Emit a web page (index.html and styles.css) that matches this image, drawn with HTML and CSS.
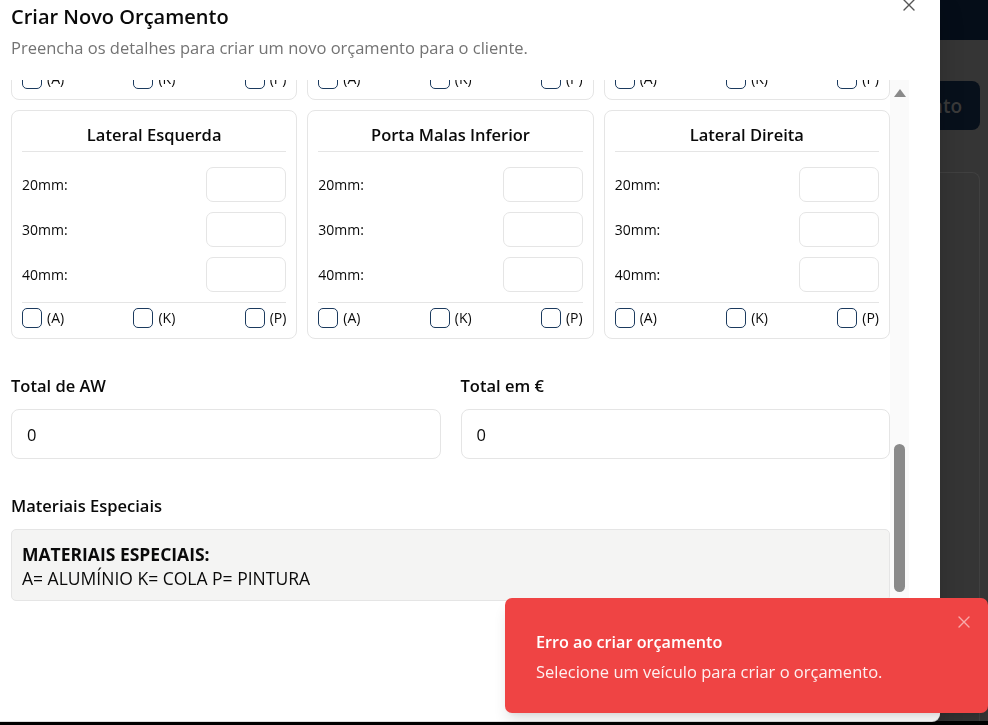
FILE: index.html
```html
<!DOCTYPE html>
<html lang="pt">
<head>
<meta charset="utf-8">
<title>Criar Novo Orçamento</title>
<link rel="stylesheet" href="styles.css">
</head>
<body>
<div class="page">
  <header class="app-bar"></header>
  <main class="app-main">
    <div class="app-actions"><button class="app-btn" type="button">Novo Orçamento</button></div>
    <section class="app-card"></section>
  </main>
</div>

<div class="modal" role="dialog" aria-labelledby="modal-title">
  <button class="modal-close" type="button" aria-label="Fechar">
    <svg width="12" height="12" viewBox="0 0 12 12"><path d="M1 1L11 11M11 1L1 11" stroke="currentColor" stroke-width="1.4" stroke-linecap="round" fill="none"/></svg>
  </button>
  <header class="modal-header">
    <h2 class="modal-title" id="modal-title">Criar Novo Orçamento</h2>
    <p class="modal-desc">Preencha os detalhes para criar um novo orçamento para o cliente.</p>
  </header>
  <div class="modal-body">
    <div class="scroll-view">
      <div class="scroll-content">
        <div class="parts-grid">
          <div class="part-card">
            <h3 class="part-title">Capô</h3>
            <div class="part-rows">
              <div class="part-row"><label>20mm:</label><input class="part-input" type="text"></div>
              <div class="part-row"><label>30mm:</label><input class="part-input" type="text"></div>
              <div class="part-row"><label>40mm:</label><input class="part-input" type="text"></div>
            </div>
            <div class="part-checks">
              <span class="check"><span class="check-box"></span>(A)</span>
              <span class="check"><span class="check-box"></span>(K)</span>
              <span class="check"><span class="check-box"></span>(P)</span>
            </div>
          </div>
          <div class="part-card">
            <h3 class="part-title">Teto</h3>
            <div class="part-rows">
              <div class="part-row"><label>20mm:</label><input class="part-input" type="text"></div>
              <div class="part-row"><label>30mm:</label><input class="part-input" type="text"></div>
              <div class="part-row"><label>40mm:</label><input class="part-input" type="text"></div>
            </div>
            <div class="part-checks">
              <span class="check"><span class="check-box"></span>(A)</span>
              <span class="check"><span class="check-box"></span>(K)</span>
              <span class="check"><span class="check-box"></span>(P)</span>
            </div>
          </div>
          <div class="part-card">
            <h3 class="part-title">Porta Malas Superior</h3>
            <div class="part-rows">
              <div class="part-row"><label>20mm:</label><input class="part-input" type="text"></div>
              <div class="part-row"><label>30mm:</label><input class="part-input" type="text"></div>
              <div class="part-row"><label>40mm:</label><input class="part-input" type="text"></div>
            </div>
            <div class="part-checks">
              <span class="check"><span class="check-box"></span>(A)</span>
              <span class="check"><span class="check-box"></span>(K)</span>
              <span class="check"><span class="check-box"></span>(P)</span>
            </div>
          </div>
        </div>

        <div class="parts-grid">
          <div class="part-card">
            <h3 class="part-title">Lateral Esquerda</h3>
            <div class="part-rows">
              <div class="part-row"><label>20mm:</label><input class="part-input" type="text"></div>
              <div class="part-row"><label>30mm:</label><input class="part-input" type="text"></div>
              <div class="part-row"><label>40mm:</label><input class="part-input" type="text"></div>
            </div>
            <div class="part-checks">
              <span class="check"><span class="check-box"></span>(A)</span>
              <span class="check"><span class="check-box"></span>(K)</span>
              <span class="check"><span class="check-box"></span>(P)</span>
            </div>
          </div>
          <div class="part-card">
            <h3 class="part-title">Porta Malas Inferior</h3>
            <div class="part-rows">
              <div class="part-row"><label>20mm:</label><input class="part-input" type="text"></div>
              <div class="part-row"><label>30mm:</label><input class="part-input" type="text"></div>
              <div class="part-row"><label>40mm:</label><input class="part-input" type="text"></div>
            </div>
            <div class="part-checks">
              <span class="check"><span class="check-box"></span>(A)</span>
              <span class="check"><span class="check-box"></span>(K)</span>
              <span class="check"><span class="check-box"></span>(P)</span>
            </div>
          </div>
          <div class="part-card">
            <h3 class="part-title">Lateral Direita</h3>
            <div class="part-rows">
              <div class="part-row"><label>20mm:</label><input class="part-input" type="text"></div>
              <div class="part-row"><label>30mm:</label><input class="part-input" type="text"></div>
              <div class="part-row"><label>40mm:</label><input class="part-input" type="text"></div>
            </div>
            <div class="part-checks">
              <span class="check"><span class="check-box"></span>(A)</span>
              <span class="check"><span class="check-box"></span>(K)</span>
              <span class="check"><span class="check-box"></span>(P)</span>
            </div>
          </div>
        </div>

        <div class="totals">
          <div class="field">
            <label class="field-label">Total de AW</label>
            <input class="field-input" type="text" value="0">
          </div>
          <div class="field">
            <label class="field-label">Total em €</label>
            <input class="field-input" type="text" value="0">
          </div>
        </div>

        <div class="materials">
          <div class="materials-label">Materiais Especiais</div>
          <div class="materials-box">
            <strong>MATERIAIS ESPECIAIS:</strong><br>
            A= ALUMÍNIO K= COLA P= PINTURA
          </div>
        </div>
      </div>
    </div>
    <div class="scrollbar" aria-hidden="true">
      <div class="sb-arrow sb-up"><span class="tri-up"></span></div>
      <div class="sb-track"><div class="sb-thumb"></div></div>
      <div class="sb-arrow sb-down"><span class="tri-down"></span></div>
    </div>
  </div>
</div>

<div class="toast" role="alert">
  <button class="toast-close" type="button" aria-label="Fechar">
    <svg width="12" height="12" viewBox="0 0 12 12"><path d="M1 1L11 11M11 1L1 11" stroke="currentColor" stroke-width="1.4" stroke-linecap="round" fill="none"/></svg>
  </button>
  <div class="toast-title">Erro ao criar orçamento</div>
  <div class="toast-desc">Selecione um veículo para criar o orçamento.</div>
</div>
</body>
</html>
```

FILE: styles.css
```css
* { box-sizing: border-box; }
html, body { margin: 0; padding: 0; }
body {
  width: 988px;
  height: 725px;
  overflow: hidden;
  background: #000;
  font-family: "Open Sans", "Noto Sans", sans-serif;
  color: #0a0a0a;
}

/* underlying (dimmed) page */
.page { height: 721px; background: #353535; display: flex; flex-direction: column; }
.app-bar { height: 40px; flex: none; background: #050d18; }
.app-main { flex: 1; display: flex; flex-direction: column; padding: 41px 8px 0 24px; }
.app-actions { display: flex; justify-content: flex-end; }
.app-btn {
  height: 49px;
  padding: 0 18px;
  border: 0;
  border-radius: 8px;
  background: #07101b;
  color: #3a3a3a;
  font: 600 19px "Open Sans", sans-serif;
}
.app-card {
  flex: 1;
  margin-top: 42px;
  border: 1px solid #404040;
  border-bottom: 0;
  border-radius: 8px 8px 0 0;
}

/* modal */
.modal {
  position: fixed;
  left: 0;
  top: 0;
  width: 940px;
  height: 721px;
  background: #fff;
  border-bottom-right-radius: 8px;
  box-shadow: 0 1px 0 #dcdcdc, 0 10px 25px rgba(0,0,0,.2);
  display: flex;
  flex-direction: column;
}
.modal-close {
  position: absolute;
  top: -1px;
  right: 25px;
  width: 12px;
  height: 12px;
  padding: 0;
  border: 0;
  background: none;
  color: #555;
}
.modal-close svg { display: block; }
.modal-header { padding: 3px 0 0 11px; }
.modal-title { margin: 0; font-size: 20px; line-height: 28px; font-weight: 600; }
.modal-desc { margin: 6px 0 0; font-size: 16.5px; line-height: 22px; color: #737373; }

.modal-body { margin-top: 21px; height: 540px; display: flex; padding-right: 31px; }
.scroll-view {
  flex: 1;
  overflow: hidden;
  display: flex;
  flex-direction: column;
  justify-content: flex-end;
  padding: 0 0 19px 11px;
}
.scroll-content { flex: none; }

.parts-grid { display: grid; grid-template-columns: repeat(3, 1fr); gap: 10px; }
.parts-grid + .parts-grid { margin-top: 10px; }
.part-card { border: 1px solid #e5e5e5; border-radius: 8px; padding: 12px 10px 10px; }
.part-title {
  margin: 0;
  padding-bottom: 4px;
  border-bottom: 1px solid #e5e5e5;
  text-align: center;
  font-size: 16.5px;
  line-height: 24px;
  font-weight: 600;
}
.part-rows { margin-top: 15px; display: flex; flex-direction: column; gap: 10px; }
.part-row { display: flex; align-items: center; justify-content: space-between; font-size: 14px; }
.part-input {
  width: 80px;
  height: 35px;
  border: 1px solid #e5e5e5;
  border-radius: 7px;
  background: #fff;
  font: inherit;
}
.part-checks {
  margin-top: 10px;
  padding-top: 5px;
  border-top: 1px solid #e5e5e5;
  display: flex;
  justify-content: space-between;
}
.check { display: flex; align-items: center; gap: 5px; font-size: 14px; line-height: 20px; }
.check-box { width: 20px; height: 20px; border: 1.5px solid #1b3a5e; border-radius: 5px; }

.totals { margin-top: 35px; display: grid; grid-template-columns: 1fr 1fr; column-gap: 20px; }
.field-label { display: block; margin-bottom: 11px; font-size: 16.5px; line-height: 24px; font-weight: 600; }
.field-input {
  display: block;
  width: 100%;
  height: 50px;
  padding: 0 15px;
  border: 1px solid #e5e5e5;
  border-radius: 8px;
  background: #fff;
  color: #0a0a0a;
  font: 16.5px "Open Sans", sans-serif;
}

.materials { margin-top: 35px; }
.materials-label { margin-bottom: 11px; font-size: 16.5px; line-height: 24px; font-weight: 600; }
.materials-box {
  padding: 12px 10px 10px;
  border: 1px solid #e5e5e5;
  border-radius: 5px;
  background: #f4f4f3;
  font-size: 17.5px;
  line-height: 24px;
}
.materials-box strong { font-weight: 700; }

/* fake scrollbar */
.scrollbar { width: 19px; flex: none; background: #fafafa; display: flex; flex-direction: column; }
.sb-arrow { height: 20px; flex: none; display: flex; justify-content: center; }
.sb-up { align-items: flex-start; padding-top: 9px; }
.sb-down { align-items: flex-end; padding-bottom: 9px; }
.tri-up { width: 0; height: 0; border-left: 6px solid transparent; border-right: 6px solid transparent; border-bottom: 8px solid #8a8a8a; }
.tri-down { width: 0; height: 0; border-left: 6px solid transparent; border-right: 6px solid transparent; border-top: 8px solid #8a8a8a; }
.sb-track { flex: 1; display: flex; justify-content: center; }
.sb-thumb { width: 11px; height: 148px; margin-top: 344px; border-radius: 6px; background: #8a8a8a; }

/* toast */
.toast {
  position: fixed;
  right: 0;
  bottom: 12px;
  width: 483px;
  height: 115px;
  padding: 32px 31px 30px;
  border-radius: 7px;
  background: #ef4444;
  color: #fff;
  box-shadow: 0 10px 15px -3px rgba(0,0,0,.12), 0 4px 6px -4px rgba(0,0,0,.1);
}
.toast-close {
  position: absolute;
  top: 18px;
  right: 18px;
  width: 12px;
  height: 12px;
  padding: 0;
  border: 0;
  background: none;
  color: rgba(255,255,255,.55);
}
.toast-close svg { display: block; }
.toast-title { font-size: 16.2px; line-height: 24px; font-weight: 600; }
.toast-desc { margin-top: 7px; font-size: 16.5px; line-height: 22px; opacity: .92; }
```
